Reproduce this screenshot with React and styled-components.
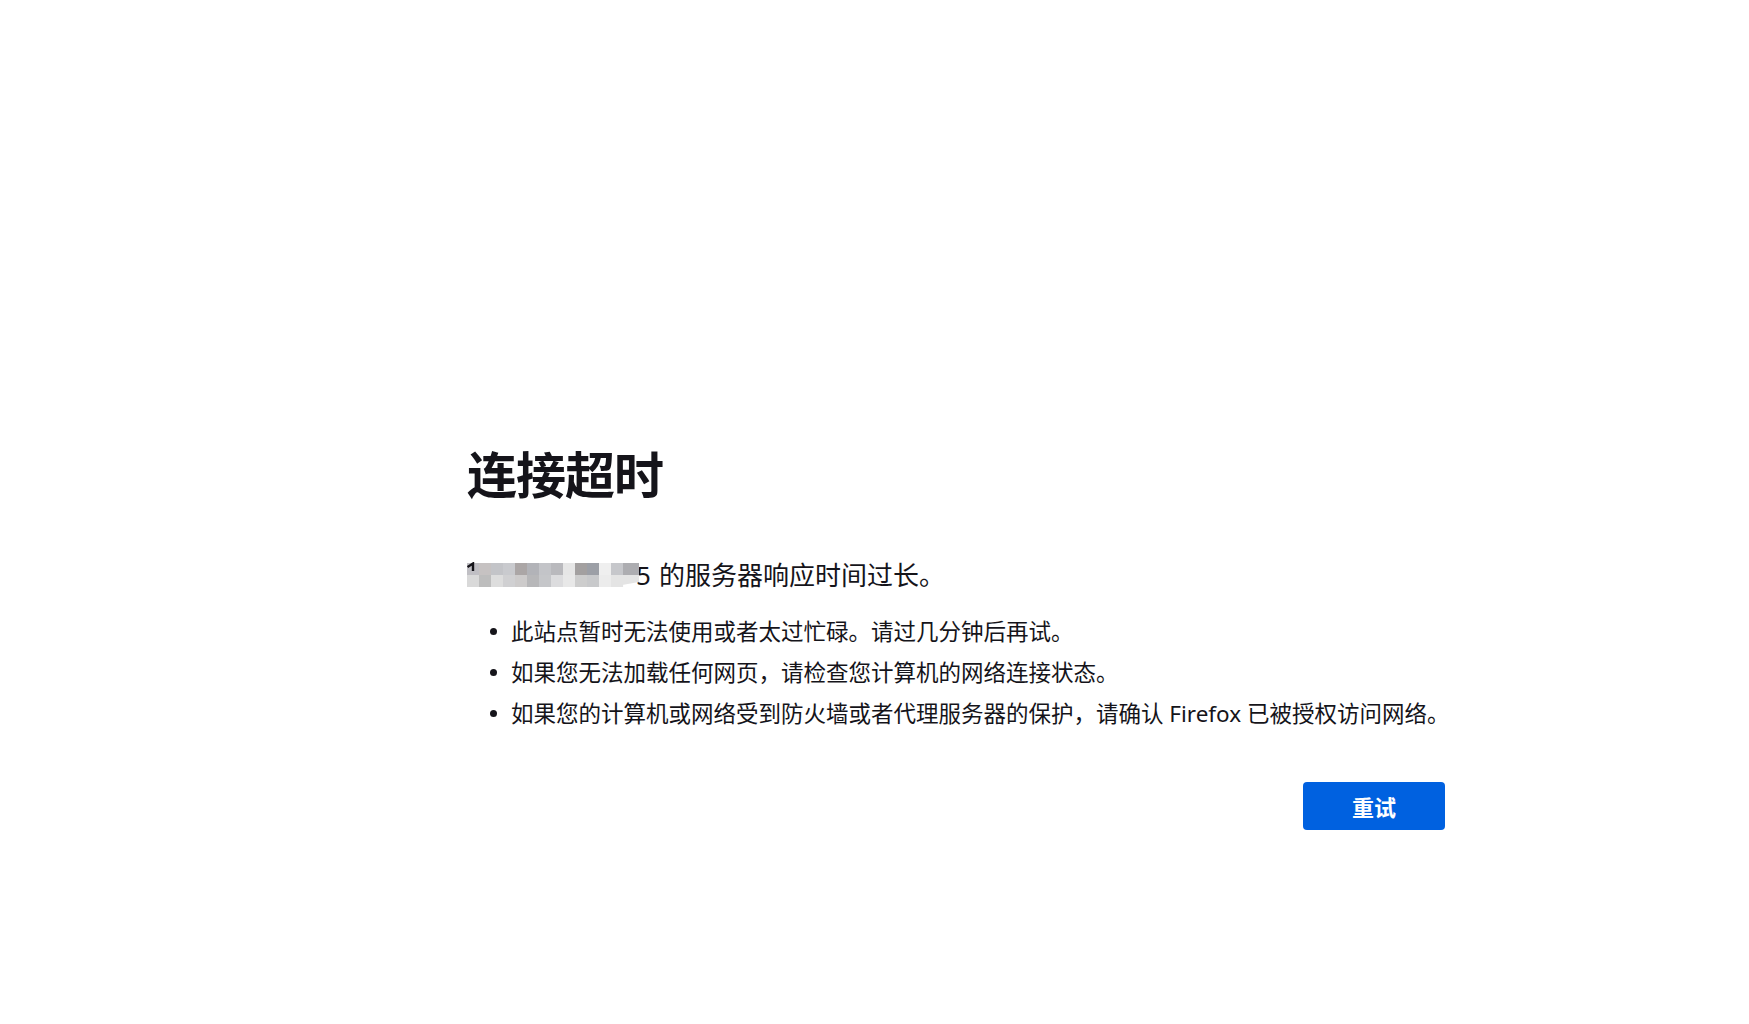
import React from "react"
import styled, { createGlobalStyle } from "styled-components"

const GlobalStyle = createGlobalStyle`
  html, body {
    margin: 0;
    padding: 0;
    background: #ffffff;
  }
  body {
    font-family: "Noto Sans", "Noto Sans CJK SC", sans-serif;
    color: #15141a;
  }
`

const Page = styled.main`
  min-height: 1024px;
  display: flex;
  justify-content: flex-start;
  padding: 445px 0 0 467px;
  box-sizing: border-box;
`

const Container = styled.div`
  width: 978px;
  display: flex;
  flex-direction: column;
`

const Title = styled.h1`
  margin: 0;
  font-size: 50px;
  line-height: 60px;
  font-weight: 700;
  letter-spacing: -1px;
`

const Lead = styled.p`
  margin: 51px 0 0;
  font-size: 26px;
  line-height: 38px;
  display: flex;
  align-items: center;
  white-space: nowrap;
`

const Mosaic = styled.svg`
  display: block;
  flex: none;
  margin-right: -3px;
  position: relative;
  z-index: 1;
`

const Host = styled.span`
  display: inline-flex;
  align-items: center;
  margin-right: 8px;
`

const List = styled.ul`
  margin: 17px 0 0;
  padding: 0 0 0 23px;
  list-style: none;
`

const Item = styled.li`
  display: flex;
  align-items: center;
  font-size: 22.5px;
  line-height: 41px;
  white-space: nowrap;
`

const Dot = styled.span`
  width: 7px;
  height: 7px;
  border-radius: 50%;
  background: #15141a;
  margin-right: 14px;
  flex: none;
`

const Actions = styled.div`
  display: flex;
  justify-content: flex-end;
  margin-top: 48px;
`

const RetryButton = styled.button`
  width: 142px;
  height: 48px;
  border: none;
  border-radius: 4px;
  background: #0061e0;
  color: #ffffff;
  font-family: "Noto Sans CJK SC", sans-serif;
  font-size: 22px;
  font-weight: 700;
  cursor: pointer;
`

const topRow = ["#c0bfc4", "#c6c2c2", "#c3c4c8", "#c9cace", "#aba6a6", "#b2b3b8", "#c3c4c8", "#b9b9bd", "#e6e6e6", "#a3a0a0", "#9c9fa6", "#efefef", "#c6c7cb", "#adadb1"]
const bottomRow = ["#d9d9d9", "#bdbdbd", "#dddddd", "#d0d0d2", "#cdcbcb", "#b7b7b9", "#c5c6c9", "#dcdcde", "#e8e8e8", "#cdcdcd", "#c8c9cb", "#ececec", "#e4e4e4"]

const BlurredAddress = () => (
  <Mosaic width="172" height="26" viewBox="0 0 172 26">
    {topRow.map((c, i) => (
      <rect key={"t" + i} x={i * 12} y="1" width="12.1" height="12" fill={c} />
    ))}
    {bottomRow.map((c, i) => (
      <rect key={"b" + i} x={i * 12} y="13" width="12.1" height="12" fill={c} />
    ))}
    <polygon points="144,13 172,13 172,20 144,25" fill="#e4e4e4" />
    <polygon points="168,1 172,1 172,13 168,13" fill="#adadb1" />
    <path d="M0.5 5 L6 1.5 L6 9" stroke="#15141a" strokeWidth="2.4" fill="none" />
  </Mosaic>
)

const reasons = [
  "此站点暂时无法使用或者太过忙碌。请过几分钟后再试。",
  "如果您无法加载任何网页，请检查您计算机的网络连接状态。",
  "如果您的计算机或网络受到防火墙或者代理服务器的保护，请确认 Firefox 已被授权访问网络。",
]

const App = () => {
  return (
    <>
      <GlobalStyle />
      <Page>
        <Container>
          <Title>连接超时</Title>
          <Lead>
            <Host>
              <BlurredAddress />
              5
            </Host>
            的服务器响应时间过长。
          </Lead>
          <List>
            {reasons.map((r) => (
              <Item key={r}>
                <Dot />
                {r}
              </Item>
            ))}
          </List>
          <Actions>
            <RetryButton>重试</RetryButton>
          </Actions>
        </Container>
      </Page>
    </>
  )
}

export default App
